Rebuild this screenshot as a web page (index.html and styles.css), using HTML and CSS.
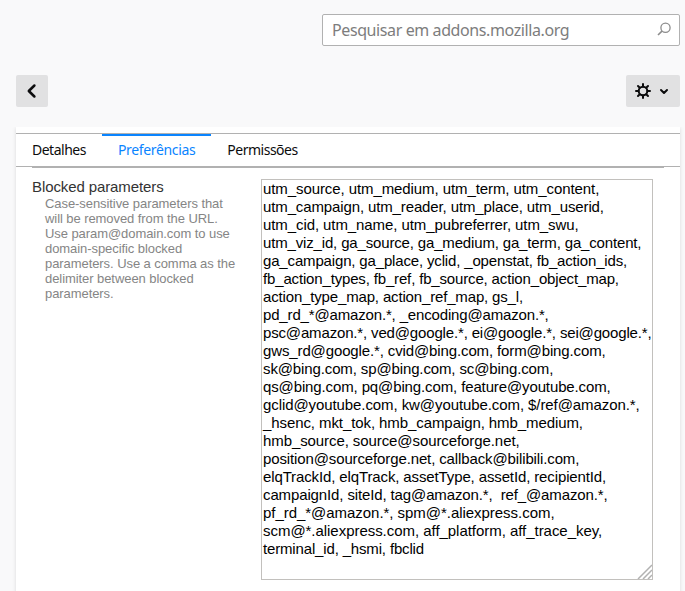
FILE: index.html
```html
<!DOCTYPE html>
<html lang="pt-BR">
<head>
<meta charset="utf-8">
<title>Complementos</title>
<link rel="stylesheet" href="styles.css">
</head>
<body>
<header class="search-row">
  <div class="search">
    <span class="search-text">Pesquisar em addons.mozilla.org</span>
    <svg class="search-icon" width="16" height="16" viewBox="0 0 16 16" fill="none" stroke="#8c8c8c"><circle cx="9.5" cy="6.8" r="4.6" stroke-width="1.3"/><path d="M6 10.200L2 14" stroke-width="1.600"/></svg>
  </div>
</header>
<div class="toolbar">
  <div class="button back">
    <svg width="16" height="16" viewBox="0 0 16 16" fill="none" stroke="#0c0c0d" stroke-width="2.500" stroke-linecap="round" stroke-linejoin="round"><path d="M10.400 2.500L4.800 8l5.600 5.500"/></svg>
  </div>
  <div class="button options">
    <svg width="16" height="16" viewBox="0 0 16 16" fill="none" stroke="#0c0c0d" stroke-width="2"><circle cx="8" cy="8" r="4.300"/><path stroke-linecap="round" d="M8 1v2.500M8 12.500V15M1 8h2.500M12.500 8H15M3 3l1.800 1.800M11.200 11.200L13 13M13 3l-1.800 1.800M4.800 11.200L3 13"/></svg>
    <svg width="10" height="16" viewBox="0 0 10 16" fill="none" stroke="#0c0c0d" stroke-width="2" stroke-linecap="round" stroke-linejoin="round"><path d="M2 7l3 3 3-3"/></svg>
  </div>
</div>
<main class="card">
  <nav class="tabs">
    <div class="tab">Detalhes</div>
    <div class="tab active">Preferências</div>
    <div class="tab">Permissões</div>
  </nav>
  <section class="preferences">
    <div class="labels">
      <div class="title">Blocked parameters</div>
      <div class="hint">Case-sensitive parameters that
will be removed from the URL.
Use param@domain.com to use
domain-specific blocked
parameters. Use a comma as the
delimiter between blocked
parameters.</div>
    </div>
    <div class="params"><span class="loose">utm_source, utm_medium, utm_term, utm_content,</span>
utm_campaign, utm_reader, utm_place, utm_userid,
<span class="loose">utm_cid, utm_name, utm_pubreferrer, utm_swu,</span>
<span class="tight">utm_viz_id, ga_source, ga_medium, ga_term, ga_content,
ga_campaign, ga_place, yclid, _openstat, fb_action_ids,
fb_action_types, fb_ref, fb_source, action_object_map,
action_type_map, action_ref_map, gs_l,
pd_rd_*@amazon.*, _encoding@amazon.*,
psc@amazon.*, ved@google.*, ei@google.*, sei@google.*,</span>
gws_rd@google.*, cvid@bing.com, form@bing.com,
sk@bing.com, sp@bing.com, sc@bing.com,
qs@bing.com, pq@bing.com, feature@youtube.com,
<span class="loose">gclid@youtube.com, kw@youtube.com, $/ref@amazon.*,
_hsenc, mkt_tok, hmb_campaign, hmb_medium,
hmb_source, source@sourceforge.net,</span>
position@sourceforge.net, callback@bilibili.com,
elqTrackId, elqTrack, assetType, assetId, recipientId,
campaignId, siteId, tag@amazon.*,  ref_@amazon.*,
<span class="looser">pf_rd_*@amazon.*, spm@*.aliexpress.com,
scm@*.aliexpress.com, aff_platform, aff_trace_key,</span>
<span class="tight">terminal_id, _hsmi, fbclid</span><svg class="grip" width="15" height="15" viewBox="0 0 15 15" fill="none" stroke="#b2b2b2" stroke-width="1.500"><path d="M1 15L15 1M6 15l9-9M11 15l4-4"/></svg></div>
  </section>
</main>
</body>
</html>
```

FILE: styles.css
```css
* { box-sizing: border-box; }
body {
  margin: 0;
  width: 685px;
  height: 591px;
  overflow: hidden;
  background: #f9f9fa;
  color: #0c0c0d;
  font-family: "Noto Sans", sans-serif;
}
svg { display: block; }
.search-row {
  display: flex;
  justify-content: flex-end;
  padding: 14px 5px 0 0;
}
.search {
  display: flex;
  align-items: center;
  justify-content: space-between;
  width: 358px;
  height: 32px;
  padding: 0 7px 0 9px;
  border: 1px solid #b1b1b1;
  border-radius: 2px;
  background: #fff;
}
.search-text {
  color: #7d7d7d;
  font-size: 16px;
  letter-spacing: -0.4px;
  white-space: nowrap;
}
.search-icon { margin-top: -3px; }
.toolbar {
  display: flex;
  justify-content: space-between;
  margin: 29px 5px 20px 16px;
}
.button {
  display: flex;
  align-items: center;
  height: 32px;
  border-radius: 2px;
  background: #e1e1e2;
}
.back { width: 32px; justify-content: center; }
.options { width: 54px; padding-left: 9px; gap: 8px; }
.card {
  width: 664px;
  height: 480px;
  margin-left: 16px;
  padding-top: 6px;
  background: #fff;
  box-shadow: 0 1px 4px rgba(12, 12, 13, 0.13);
  clip-path: inset(0 -8px);
}
.tabs {
  display: flex;
  height: 34px;
  border-top: 1px solid #b1b1b1;
  border-bottom: 1px solid #b1b1b1;
}
.tab {
  height: 33px;
  padding: 0 16px;
  font-size: 14px;
  letter-spacing: -0.5px;
  line-height: 31px;
  white-space: nowrap;
}
.active {
  color: #0a84ff;
  letter-spacing: -0.34px;
  box-shadow: inset 0 2px #0a84ff;
}
.preferences {
  display: flex;
  justify-content: space-between;
  margin: 0 16px;
  padding: 11px 11px 0 0;
  border-top: 1px solid #b1b1b1;
  font-family: "Liberation Sans", Arial, sans-serif;
}
.title {
  padding-bottom: 2px;
  font-size: 15px;
  letter-spacing: -0.1px;
  line-height: 15px;
  color: #333;
}
.hint {
  padding-left: 13px;
  font-size: 13px;
  letter-spacing: -0.07px;
  line-height: 15px;
  color: #858585;
  white-space: pre;
}
.params {
  position: relative;
  width: 392px;
  height: 401px;
  padding: 0 1px;
  border: 1px solid #c2c0bd;
  font-size: 15px;
  letter-spacing: -0.125px;
  line-height: 18px;
  color: #000;
  white-space: pre;
}
.tight { letter-spacing: -0.158px; }
.loose { letter-spacing: -0.085px; }
.looser { letter-spacing: -0.04px; }
.grip { position: absolute; right: 0; bottom: 0; }
```
